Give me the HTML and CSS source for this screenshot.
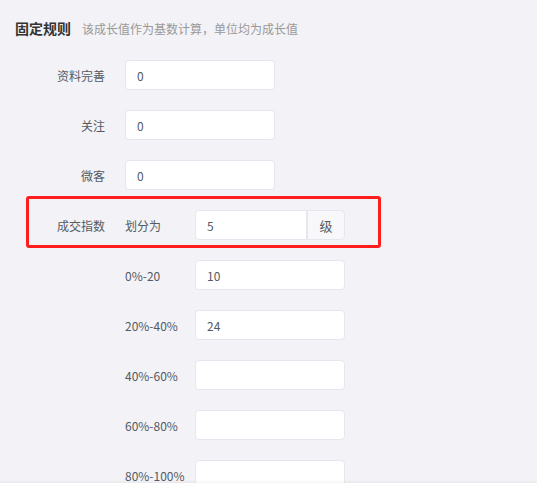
FILE: index.html
```html
<!DOCTYPE html>
<html lang="zh-CN">
<head>
  <meta charset="UTF-8">
  <meta name="viewport" content="width=device-width, initial-scale=1.0">
  <title>固定规则</title>
  <link rel="stylesheet" href="styles.css">
</head>
<body>
  <div class="page">
    <div class="section-head">
      <span class="section-title">固定规则</span>
      <span class="section-tip">该成长值作为基数计算，单位均为成长值</span>
    </div>

    <div class="form-row">
      <label class="form-label">资料完善</label>
      <input class="form-input" type="text" value="0">
    </div>
    <div class="form-row">
      <label class="form-label">关注</label>
      <input class="form-input" type="text" value="0">
    </div>
    <div class="form-row">
      <label class="form-label">微客</label>
      <input class="form-input" type="text" value="0">
    </div>

    <div class="form-row highlight">
      <label class="form-label">成交指数</label>
      <span class="sub-label">划分为</span>
      <div class="input-group">
        <input class="form-input" type="text" value="5">
        <span class="input-append">级</span>
      </div>
    </div>

    <div class="form-row">
      <span class="range-label">0%-20</span>
      <input class="form-input" type="text" value="10">
    </div>
    <div class="form-row">
      <span class="range-label">20%-40%</span>
      <input class="form-input" type="text" value="24">
    </div>
    <div class="form-row">
      <span class="range-label">40%-60%</span>
      <input class="form-input" type="text" value="">
    </div>
    <div class="form-row">
      <span class="range-label">60%-80%</span>
      <input class="form-input" type="text" value="">
    </div>
    <div class="form-row">
      <span class="range-label">80%-100%</span>
      <input class="form-input" type="text" value="">
    </div>
  </div>

  <div class="footer-bar"></div>
</body>
</html>
```

FILE: styles.css
```css
*, *::before, *::after { box-sizing: border-box; }

html, body {
  height: 100%;
}

body {
  margin: 0;
  overflow: hidden;
  background: #f2f2f7;
  font-family: "Noto Sans CJK SC", "Microsoft YaHei", sans-serif;
  font-size: 12px;
  color: #555a63;
}

.page {
  padding: 18px 15px 0;
}

.section-head {
  display: flex;
  align-items: center;
  height: 20px;
  margin-bottom: 22px;
}

.section-title {
  font-size: 14px;
  font-weight: bold;
  color: #333;
}

.section-tip {
  margin-left: 11px;
  color: #999;
}

.form-row {
  position: relative;
  display: flex;
  align-items: center;
  height: 30px;
  margin-bottom: 20px;
}

.form-label {
  width: 110px;
  padding-right: 20px;
  text-align: right;
}

.sub-label,
.range-label {
  width: 70px;
}

.range-label {
  margin-left: 110px;
}

.form-input {
  width: 150px;
  height: 30px;
  padding: 0 11px;
  border: 1px solid #e4e7ed;
  border-radius: 4px;
  background: #fff;
  font-family: inherit;
  font-size: 12px;
  color: #555a63;
  outline: none;
}

.input-group {
  display: flex;
  width: 150px;
}

.input-group .form-input {
  flex: 1;
  min-width: 0;
  width: auto;
  border-radius: 4px 0 0 4px;
}

.input-append {
  display: flex;
  align-items: center;
  justify-content: center;
  width: 38px;
  height: 30px;
  border: 1px solid #e4e7ed;
  border-radius: 0 4px 4px 0;
  background: #f8f8fa;
  font-size: 13px;
}

/* 标注框 */
.highlight::after {
  content: "";
  position: absolute;
  left: 11px;
  top: -14px;
  width: 355px;
  height: 52px;
  border: 3px solid #ff1e1e;
  border-radius: 3px;
}

.footer-bar {
  position: fixed;
  left: 0;
  right: 0;
  bottom: 0;
  height: 14px;
  background: #fff;
  box-shadow: 0 -1px 3px rgba(0, 0, 0, 0.06);
}
```
